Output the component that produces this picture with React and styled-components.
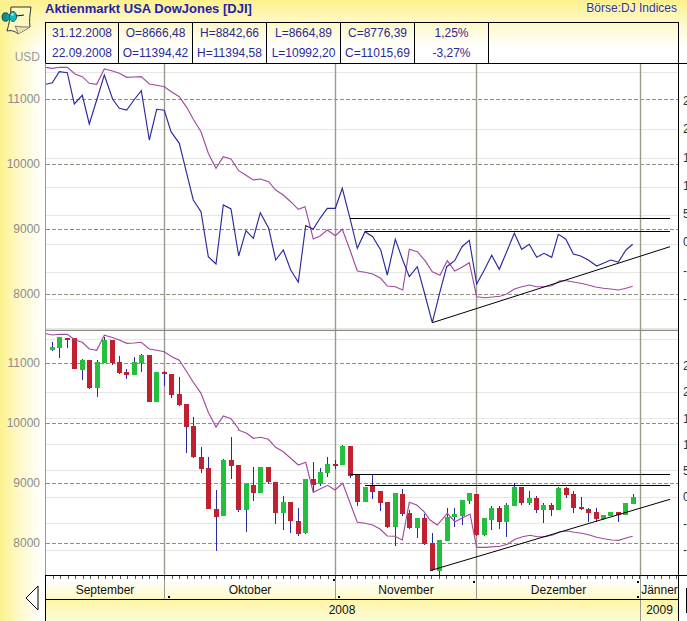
import React from "react";
import styled, { createGlobalStyle } from "styled-components";

const Global = createGlobalStyle`
  html, body { margin: 0; padding: 0; background: #fff; }
  body { font-family: "Liberation Sans", Arial, sans-serif; font-size: 12px; }
`;

const INK = "#2a2a96";
const GREY = "#9b9b8d";

const Page = styled.div`
  width: 687px;
  height: 621px;
  overflow: hidden;
  display: grid;
  grid-template-columns: 45px 634px 8px;
  grid-template-rows: 22px 41px 268px 244px 24px 22px;
  background:
    linear-gradient(180deg, #fdf18d 0, rgba(253, 243, 150, 0.55) 22px, rgba(255, 255, 255, 0) 48px),
    linear-gradient(90deg, #fdf18d 0, rgba(253, 243, 150, 0.55) 18px, rgba(255, 255, 255, 0) 42px),
    #fff;
`;

const IconCell = styled.div`
  grid-column: 1;
  grid-row: 1 / 3;
  display: flex;
  flex-direction: column;
  align-items: flex-end;
  justify-content: space-between;
  padding: 5px 5px 0 0;
  box-sizing: border-box;
`;
const Usd = styled.div`
  color: #9a9a9a;
  font-size: 12px;
  line-height: 14px;
  margin-bottom: -1px;
`;
const TitleBar = styled.div`
  grid-column: 2 / 4;
  grid-row: 1;
  display: flex;
  justify-content: space-between;
  align-items: flex-start;
  padding-right: 10px;
`;
const Title = styled.div`
  color: #2323aa;
  font-weight: bold;
  font-size: 13px;
  line-height: 18px;
  white-space: nowrap;
`;
const Exchange = styled.div`
  color: #34348e;
  font-size: 12px;
  line-height: 17px;
  white-space: nowrap;
  text-shadow: 0 0 2px #fff;
`;
const Stats = styled.div`
  grid-column: 2;
  grid-row: 2;
  display: grid;
  grid-template-columns: 73px 74px 74px 74px 74px 74px 1fr;
  border-top: 1px solid #000;
  border-right: 1px solid #000;
  box-sizing: border-box;
`;
const StatCell = styled.div`
  border-left: 1px solid #000;
  display: flex;
  flex-direction: column;
  align-items: center;
  padding-top: 0;
  color: ${INK};
  font-size: 12px;
  line-height: 20px;
  white-space: nowrap;
`;
const Panel = styled.div`
  grid-column: 2;
  box-sizing: border-box;
  border-left: 1px solid ${GREY};
  border-right: 1px solid #000;
  border-top: ${(p) => (p.$first ? "1px solid #000" : "0")};
  background: #fff;
  svg { display: block; }
`;
const LeftTicks = styled.div`
  grid-column: 1;
  padding-top: ${(p) => p.$pad}px;
  padding-right: 5px;
  text-align: right;
  color: #8c8c8c;
  font-size: 12px;
`;
const LeftTick = styled.div`
  height: ${(p) => p.$h}px;
  line-height: ${(p) => p.$h}px;
`;
const RightTicks = styled.div`
  grid-column: 3;
  overflow: hidden;
  padding-top: ${(p) => p.$pad}px;
  padding-left: 4px;
  border-top: ${(p) => (p.$first ? "1px solid #000" : "0")};
  box-sizing: border-box;
  color: #333;
  font-size: 12px;
  white-space: nowrap;
`;
const RightTick = styled.div`
  height: ${(p) => p.$h}px;
  line-height: ${(p) => p.$h}px;
`;
const Nav = styled.div`
  grid-column: 1;
  grid-row: 5 / 7;
  display: flex;
  justify-content: flex-end;
  align-items: center;
  padding-right: 6px;
`;
const TimeAxis = styled.div`
  grid-column: 2;
  grid-row: 5;
  position: relative;
  display: flex;
  box-sizing: border-box;
  border-left: 1px solid #000;
  border-right: 1px solid #000;
  border-top: 1px solid #000;
  background: linear-gradient(180deg, #fff 0, #fff 20%, #fdf9c4 100%);
`;
const Month = styled.div`
  width: ${(p) => p.$w}px;
  box-sizing: border-box;
  border-left: ${(p) => (p.$first ? "0" : `1px solid ${GREY}`)};
  text-align: center;
  color: #111;
  font-size: 12px;
  line-height: 14px;
  padding-top: 7px;
  white-space: nowrap;
  overflow: hidden;
`;
const Ticks = styled.svg`
  position: absolute;
  left: 0;
  top: 0;
  pointer-events: none;
`;
const YearAxis = styled.div`
  grid-column: 2;
  grid-row: 6;
  display: flex;
  box-sizing: border-box;
  border-left: 1px solid #000;
  border-right: 1px solid #000;
  border-top: 1px solid #000;
  background: linear-gradient(180deg, #fdf5a4 0, #fefbd8 100%);
`;
const Year = styled.div`
  width: ${(p) => p.$w}px;
  box-sizing: border-box;
  border-left: ${(p) => (p.$first ? "0" : `1px solid ${GREY}`)};
  padding-right: ${(p) => (p.$first ? 2 : 0)}px;
  text-align: center;
  color: #111;
  font-size: 12px;
  line-height: 21px;
`;
const Slider = styled.div`
  grid-column: 3;
  grid-row: 5 / 7;
  display: flex;
  flex-direction: column;
  align-items: flex-end;
  border-top: 1px solid #000;
`;
const SliderEdge = styled.div`
  width: 1px;
  height: 25px;
  margin: 12px 0 0;
  background: #000;
`;

/* zoom-crop coordinates -> page coordinates */
const pts = (ox, oy, list) => list.map(([x, y]) => [ox + x / 3, oy + y / 3]);
const str = (l) => l.map(([x, y]) => `${x.toFixed(1)},${y.toFixed(1)}`).join(" ");

const blueTop = [
  ...pts(40, 60, [[17,73],[37,68],[58,35],[82,38],[103,132],[127,106],[148,192],[170,120],[193,45],[218,118],[238,145],[260,150],[282,120],[304,92],[328,240],[350,148],[373,151],[393,215],[418,250],[440,340],[460,420],[483,455],[505,590],[528,612],[550,435],[573,447],[596,588],[618,512],[640,535],[661,458],[686,505],[707,600],[730,570],[752,630],[775,666],[797,497],[820,507],[840,475],[862,445],[886,445]]),
  ...pts(330, 170, [[37,55],[60,145],[82,235],[105,185],[128,200],[152,240],[172,315],[196,208],[218,270],[238,320],[262,290],[285,375],[307,458],[330,365],[350,290],[374,272],[396,230],[418,211],[440,342],[463,300],[485,256],[508,298],[530,245],[553,190],[575,238],[598,223],[620,262],[642,250],[665,262],[685,193],[707,207],[730,252],[752,258],[775,270],[800,288],[820,280],[842,270],[865,276],[888,240],[908,223]]),
];
const purpleTop = [
  ...pts(40, 60, [[17,22],[37,25],[60,22],[82,22],[105,42],[127,50],[148,70],[170,73],[193,27],[215,32],[238,40],[260,52],[282,51],[304,50],[328,72],[350,76],[373,80],[395,96],[418,110],[440,142],[460,178],[483,215],[505,280],[528,325],[550,290],[573,297],[596,332],[618,346],[640,360],[661,357],[686,365],[707,390],[730,405],[752,425],[775,448],[795,440],[820,537],[840,528],[862,510],[886,527]]),
  ...pts(330, 170, [[37,178],[60,240],[82,303],[105,307],[128,312],[152,325],[172,348],[196,350],[218,360],[238,238],[262,245],[285,272],[307,305],[330,316],[352,272],[374,303],[396,292],[418,278],[440,380],[465,383],[510,379],[530,372],[553,357],[575,350],[598,345],[620,350],[642,350],[665,347],[690,332],[710,332],[730,336],[752,340],[775,345],[797,351],[820,355],[842,357],[865,360],[888,355],[908,349]]),
];
const purpleBottom = [
  ...pts(40, 325, [[17,26],[37,30],[60,28],[82,28],[105,45],[127,52],[148,72],[170,76],[193,31],[215,37],[238,45],[260,55],[282,54],[304,52],[328,72],[350,76],[373,80],[395,95],[418,106],[440,140],[460,172],[483,205],[505,262],[528,306],[550,273],[573,281],[596,312]]),
  ...pts(230, 420, [[25,30],[50,40],[70,55],[92,52],[115,58],[137,82],[160,95],[182,115],[205,135],[227,127],[250,217],[270,207],[293,196],[315,210],[338,190],[382,307],[405,310],[428,315],[450,327],[472,348],[495,349],[517,360],[538,247],[560,255],[582,275]]),
  ...pts(430, 450, [[0,210],[22,225],[52,190],[75,215],[98,203],[120,192],[140,292],[165,292],[210,289],[232,283],[255,268],[278,260],[300,256],[322,260],[345,260],[368,255],[390,245],[412,243],[433,247],[455,250],[478,255],[500,262],[522,266],[545,270],[566,271],[588,264],[608,259]]),
];

const candleGroups = [
  [40, 325, [
    [37,52,78,66,75,"g"],[58,36,98,36,68,"g"],[82,38,68,39,41,"r"],[103,40,131,40,131,"r"],
    [127,103,165,106,135,"g"],[148,105,191,105,188,"r"],[172,105,215,111,188,"g"],[193,35,113,45,113,"g"],
    [217,45,120,45,114,"r"],[238,93,147,111,144,"r"],[259,133,162,141,150,"r"],[283,96,150,111,150,"g"],
    [304,87,141,90,114,"g"],[328,90,231,90,231,"r"],[349,141,231,141,231,"g"],[373,139,183,141,147,"r"],
    [394,147,219,147,209,"r"],[418,156,243,207,240,"r"],[439,237,384,237,305,"r"],[460,276,398,303,396,"r"],
    [484,366,444,396,432,"r"],[505,396,552,429,552,"r"],[529,495,678,552,576,"r"],[550,402,573,405,573,"g"],
    [574,336,462,405,423,"r"],
  ]],
  [230, 420, [
    [25,135,275,135,270,"r"],[49,190,335,190,270,"g"],[70,140,243,195,219,"r"],[92,140,219,140,219,"g"],
    [115,140,192,140,186,"r"],[136,186,312,186,279,"r"],[160,228,330,246,279,"g"],[181,246,339,246,303,"r"],
    [205,264,348,303,342,"r"],[227,177,342,177,339,"g"],[250,126,215,177,194,"r"],[271,144,198,156,192,"g"],
    [292,111,171,132,159,"g"],[316,120,147,132,134,"r"],[338,75,135,78,135,"g"],[361,78,174,78,168,"r"],
    [382,165,258,165,246,"r"],[406,201,246,201,246,"g"],[428,165,237,198,216,"r"],[451,213,273,213,249,"r"],
    [472,246,324,246,321,"r"],[496,219,378,219,321,"g"],[518,208,288,222,282,"r"],[538,270,327,279,324,"r"],
    [562,294,354,294,324,"g"],[583,282,374,294,372,"r"],
  ]],
  [430, 450, [
    [7,250,362,280,360,"r"],[28,270,378,270,362,"g"],[52,175,272,200,272,"g"],[73,175,232,192,201,"g"],
    [97,150,225,150,198,"g"],[118,128,162,128,153,"g"],[139,132,257,132,255,"r"],[163,205,257,205,255,"g"],
    [185,168,240,174,210,"g"],[208,168,237,174,216,"r"],[229,159,261,165,216,"g"],[253,99,168,111,168,"g"],
    [274,111,165,111,159,"r"],[298,123,165,144,159,"g"],[319,138,189,144,180,"r"],[340,159,219,165,180,"g"],
    [364,159,198,165,180,"r"],[385,111,180,114,180,"g"],[409,111,144,114,135,"r"],[430,123,189,132,174,"r"],
    [454,141,180,171,177,"r"],[475,174,216,177,189,"r"],[499,174,216,186,207,"r"],[520,195,210,195,207,"g"],
    [541,186,198,186,198,"g"],[565,186,216,186,195,"r"],[586,159,195,159,195,"g"],[610,132,162,141,162,"g"],
  ]],
];
const candles = candleGroups.flatMap(([ox, oy, list]) =>
  list.map(([x, wt, wb, bt, bb, c]) => ({
    x: Math.round(ox + x / 3 - 2.5),
    wt: Math.round(oy + wt / 3),
    wb: Math.round(oy + wb / 3),
    bt: Math.round(oy + bt / 3),
    bb: Math.round(oy + bb / 3),
    c,
  }))
);

const VERTICALS = [164, 335, 476, 640];
const Grid = ({ solid, dashed, x1 = 46, x2 = 678, y1, y2 }) => (
  <g>
    <g shapeRendering="crispEdges">
      {solid.map((y) => (
        <line key={y} x1={x1} x2={x2} y1={y + 0.5} y2={y + 0.5} stroke="#e6e6e6" />
      ))}
      {dashed.map((y) => (
        <line key={y} x1={x1} x2={x2} y1={y + 0.5} y2={y + 0.5} stroke="#8f8f80" strokeDasharray="4 2" />
      ))}
    </g>
    {VERTICALS.map((x) => (
      <line key={x} x1={x + 0.5} x2={x + 0.5} y1={y1} y2={y2} stroke={GREY} strokeWidth="1.4" />
    ))}
  </g>
);

const Trend = ({ lines }) => (
  <g stroke="#000" strokeWidth="1">
    {lines.map(([a, b, c, d], i) => (
      <line key={i} x1={a} y1={b} x2={c} y2={d} shapeRendering={b === d ? "crispEdges" : "auto"} />
    ))}
  </g>
);

const TopChart = () => (
  <svg width="632" height="267" viewBox="46 64 632 267">
    <Grid solid={[72, 129, 158, 187, 215, 244, 272, 299, 328]} dashed={[99, 164, 229, 294]} y1={64} y2={330} />
    <line x1="46" x2="678" y1="330.5" y2="330.5" stroke="#8a8a7c" strokeWidth="1.4" />
    <polyline points={str(purpleTop)} fill="none" stroke="#a04aa0" strokeWidth="1.15" />
    <polyline points={str(blueTop)} fill="none" stroke="#2a2a9e" strokeWidth="1.15" />
    <Trend lines={[[350, 218.5, 670, 218.5], [365, 231.5, 670, 231.5], [432.3, 322.7, 670, 246.7]]} />
  </svg>
);

const BottomChart = () => (
  <svg width="632" height="244" viewBox="46 331 632 244">
    <Grid solid={[339, 392, 418, 444, 470, 497, 523, 550]} dashed={[363, 423, 483, 543]} y1={331} y2={575} />
    {candles.map((k, i) => (
      <g key={i} shapeRendering="crispEdges">
        <rect x={k.x + 2} y={k.wt} width="1" height={k.wb - k.wt} fill="#2a2a9e" />
        <rect x={k.x} y={k.bt} width="5" height={Math.max(k.bb - k.bt, 2)} fill={k.c === "g" ? "#22c03c" : "#c0202f"} />
      </g>
    ))}
    <polyline points={str(purpleBottom)} fill="none" stroke="#a04aa0" strokeWidth="1.15" />
    <Trend lines={[[350, 474.5, 670, 474.5], [365, 485.5, 670, 485.5], [430, 570.7, 670, 499.3]]} />
  </svg>
);

const NoteIcon = () => (
  <svg width="36" height="30" viewBox="0 0 36 30" style={{ alignSelf: "flex-start", marginLeft: 1 }}>
    <path d="M10 2 L30 2 C29 9 28 16 29 22 C25 24 21 27 17 29 C14 26 10 25 6 26 C8 19 10 10 10 2Z" fill="#fdf7c2" stroke="#333" strokeWidth="1" />
    <path d="M17 29 C16 25 15 23 14 21 C18 22 24 22 29 22" fill="#e9e3a6" stroke="#777" strokeWidth="1" />
    <line x1="15" y1="11" x2="23" y2="10" stroke="#111" strokeWidth="1.2" />
    <ellipse cx="4.5" cy="12" rx="3.5" ry="4.3" fill="#0e8f8f" stroke="#063f3f" strokeWidth="0.8" />
    <rect x="6" y="9.5" width="5" height="5" fill="#0aa6a6" />
    <ellipse cx="12" cy="11.5" rx="3.6" ry="5" fill="#14b9b9" stroke="#063f3f" strokeWidth="0.8" />
    <circle cx="11.5" cy="9.5" r="1.2" fill="#b9f2f2" />
  </svg>
);

const TICKS = Array.from({ length: 85 }, (_, i) => 53 + i * 7.42);
const DOTS = [[168, 596], [333, 579], [338, 596], [473, 581], [637, 581], [637, 596]];
const TimeTicks = () => (
  <Ticks width="632" height="23" viewBox="46 576 632 23">
    <g shapeRendering="crispEdges">
      {TICKS.map((x) => (
        <line key={x} x1={Math.round(x) + 0.5} x2={Math.round(x) + 0.5} y1="576" y2="579" stroke="#555" />
      ))}
      {DOTS.map(([x, y]) => (
        <rect key={`${x}-${y}`} x={x} y={y} width="2" height="2" fill="#000" />
      ))}
    </g>
  </Ticks>
);

const stats = [
  ["31.12.2008", "22.09.2008"],
  ["O=8666,48", "O=11394,42"],
  ["H=8842,66", "H=11394,58"],
  ["L=8664,89", "L=10992,20"],
  ["C=8776,39", "C=11015,69"],
  ["1,25%", "-3,27%"],
  ["", ""],
];
const months = [["September", 118, true], ["Oktober", 171], ["November", 141], ["Dezember", 164], ["Jänner", 38]];
const RIGHT = ["25", "20", "15", "10", "5", "0", "-5", "-10"];

export default function App() {
  return (
    <Page>
      <Global />
      <IconCell>
        <NoteIcon />
        <Usd>USD</Usd>
      </IconCell>
      <TitleBar>
        <Title>Aktienmarkt USA DowJones [DJI]</Title>
        <Exchange>Börse:DJ Indices</Exchange>
      </TitleBar>
      <Stats>
        {stats.map(([a, b], i) => (
          <StatCell key={i}>
            <span>{a}</span>
            <span>{b}</span>
          </StatCell>
        ))}
      </Stats>

      <LeftTicks $pad={4}>
        {["11000", "10000", "9000", "8000"].map((t) => (
          <LeftTick key={t} $h={65}>{t}</LeftTick>
        ))}
      </LeftTicks>
      <Panel $first><TopChart /></Panel>
      <RightTicks $first $pad={23}>
        {RIGHT.map((t) => (
          <RightTick key={t} $h={28.3}>{t}</RightTick>
        ))}
      </RightTicks>

      <LeftTicks $pad={2}>
        {["11000", "10000", "9000", "8000"].map((t) => (
          <LeftTick key={t} $h={60}>{t}</LeftTick>
        ))}
      </LeftTicks>
      <Panel><BottomChart /></Panel>
      <RightTicks $pad={22}>
        {RIGHT.map((t) => (
          <RightTick key={t} $h={26.3}>{t}</RightTick>
        ))}
      </RightTicks>

      <Nav>
        <svg width="14" height="26" viewBox="0 0 14 26">
          <path d="M13 1 L1 13 L13 25 Z" fill="#fff" stroke="#000" strokeWidth="1" />
        </svg>
      </Nav>
      <TimeAxis>
        {months.map(([m, w, first]) => (
          <Month key={m} $w={w} $first={first}>{m}</Month>
        ))}
        <TimeTicks />
      </TimeAxis>
      <Slider><SliderEdge /></Slider>
      <YearAxis>
        <Year $w={594} $first>2008</Year>
        <Year $w={38}>2009</Year>
      </YearAxis>
    </Page>
  );
}
